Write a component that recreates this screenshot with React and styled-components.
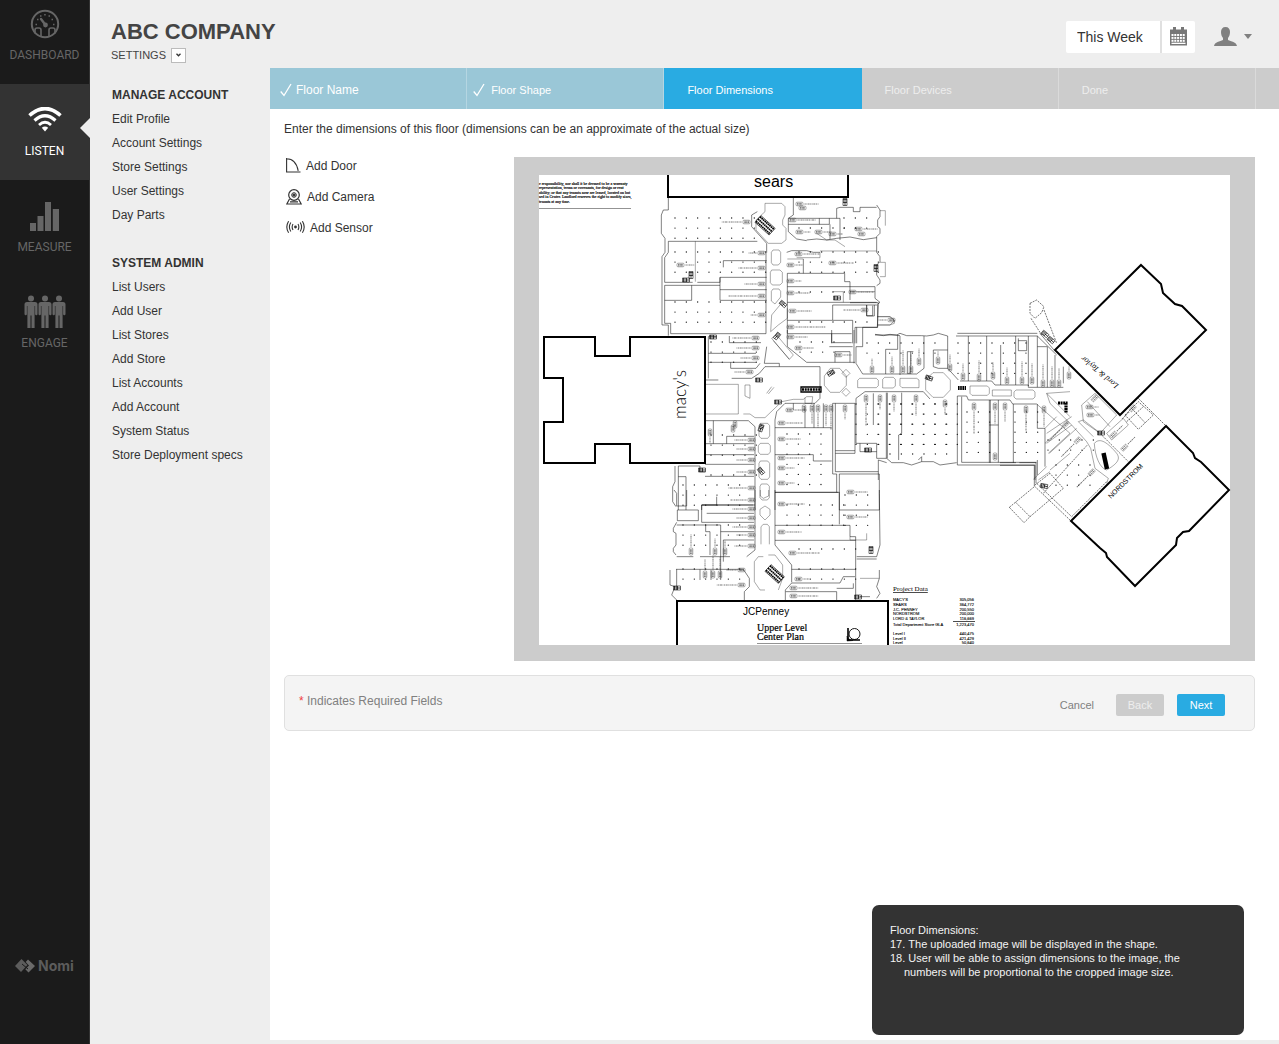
import React from "react";
import styled, { createGlobalStyle } from "styled-components";

const Global = createGlobalStyle`
  *, *::before, *::after { box-sizing: border-box; }
  body {
    margin: 0;
    background: #eee;
    color: #333;
    font: 12px/16px "Liberation Sans", Arial, sans-serif;
  }
  button, input { font: inherit; color: inherit; margin: 0; }
  button { cursor: pointer; border: 0; background: none; padding: 0; }
  a { color: inherit; text-decoration: none; }
  ul { list-style: none; margin: 0; padding: 0; }
`;

const Page = styled.div`
  display: flex;
  min-height: 100vh;
`;

/* ---------- dark navigation rail ---------- */

const Rail = styled.nav`
  flex: 0 0 90px;
  display: flex;
  flex-direction: column;
  justify-content: space-between;
  background: #1b1b1b;
  border-right: 1px solid #333;
`;

const RailLink = styled.a`
  position: relative;
  display: flex;
  flex-direction: column;
  align-items: center;
  justify-content: flex-end;
  height: ${(p) => (p.$first ? 84 : 96)}px;
  padding-bottom: 21px;
  gap: 6px;
  font-family: Roboto, "Liberation Sans", sans-serif;
  font-size: 12px;
  line-height: 16px;
  color: ${(p) => (p.$active ? "#fff" : "#666")};
  background: ${(p) => (p.$active ? "#333" : "transparent")};

  &::after {
    content: ${(p) => (p.$active ? '""' : "none")};
    position: absolute;
    right: -1px;
    top: 34px;
    border: 10px solid transparent;
    border-left-width: 0;
    border-right-color: #eee;
  }
`;

const IconSlot = styled.span`
  display: flex;
  align-items: center;
  justify-content: center;
  height: 34px;
`;

const Brand = styled.a`
  display: flex;
  align-items: center;
  gap: 3px;
  padding: 0 0 70px 15px;
  font: 700 14px/16px Inter, "Liberation Sans", sans-serif;
  color: #5c5c5c;
`;

/* ---------- workspace ---------- */

const Workspace = styled.div`
  flex: 1;
  min-width: 0;
  display: flex;
  flex-direction: column;
`;

const Header = styled.header`
  display: flex;
  justify-content: space-between;
  height: 68px;
  padding: 20px 27px 0 21px;
`;

const Company = styled.h1`
  margin: 0;
  font-size: 22px;
  line-height: 24px;
  color: #444;
`;

const Crumb = styled.div`
  display: flex;
  align-items: center;
  gap: 5px;
  margin-top: 3px;
  font-size: 11px;
  color: #444;
`;

const CrumbButton = styled.button`
  display: grid;
  place-items: center;
  width: 15px;
  height: 15px;
  background: #fff;
  border: 1px solid #bbb;
`;

const HeaderTools = styled.div`
  display: flex;
  align-items: center;
  height: 33px;
`;

const PeriodInput = styled.input`
  width: 94px;
  height: 32px;
  padding: 0 11px;
  border: 0;
  border-radius: 2px 0 0 2px;
  background: #fff;
  font-size: 14px;
`;

const CalendarButton = styled.button`
  display: grid;
  place-items: center;
  width: 35px;
  height: 32px;
  background: #fff;
  border-left: 2px solid #e0e0e0;
  border-radius: 0 2px 2px 0;
`;

const UserButton = styled.button`
  display: flex;
  align-items: center;
  gap: 7px;
  margin-left: 19px;
`;

const Columns = styled.div`
  flex: 1;
  display: flex;
  padding-bottom: 4px;
`;

const SideMenu = styled.nav`
  flex: 0 0 180px;
  padding: 15px 0 0 22px;
`;

const MenuGroup = styled.section`
  margin-bottom: 24px;
`;

const MenuTitle = styled.h2`
  margin: 0;
  font-size: 12px;
  line-height: 24px;
`;

const MenuLink = styled.a`
  display: block;
  line-height: 24px;
  white-space: nowrap;
`;

const Main = styled.main`
  position: relative;
  flex: 1;
  min-width: 0;
  background: #fff;
`;

const Steps = styled.ol`
  display: grid;
  grid-template-columns: repeat(5, 1fr);
  height: 41px;
  margin: 0;
  padding: 0 23px 0 0;
  list-style: none;
  background: #ccc;
`;

const stepColor = { done: "#9ac7d7", current: "#29abe2", todo: "#ccc" };
const stepEdge = { done: "#b5d6e2", current: "#29abe2", todo: "#dadada" };

const Step = styled.li`
  display: flex;
  align-items: center;
  padding: 3px 0 0 ${(p) => (p.$state !== "done" ? 23 : p.$lead ? 10 : 6)}px;
  gap: ${(p) => (p.$lead ? 4 : 6)}px;
  font-size: ${(p) => (p.$lead ? 12 : 11)}px;
  color: ${(p) => (p.$state === "todo" ? "#eee" : "#fff")};
  background: ${(p) => stepColor[p.$state]};
  border-right: 1px solid ${(p) => stepEdge[p.$state]};
`;

const Body = styled.div`
  padding: 12px 24px 0 14px;
`;

const Intro = styled.p`
  margin: 0 0 20px;
`;

const Editor = styled.div`
  display: grid;
  grid-template-columns: 230px 1fr;
`;

const Tools = styled.div`
  display: flex;
  flex-direction: column;
  align-items: flex-start;
  gap: 13px;
`;

const ToolButton = styled.button`
  display: flex;
  align-items: center;
  gap: 5px;
  height: 18px;
  padding-left: 2px;
`;

const PlanFrame = styled.figure`
  margin: 0;
  padding: 18px 25px 16px;
  background: #ccc;
`;

const Plan = styled.svg`
  display: block;
  width: 100%;
  height: auto;
  overflow: visible;
  background: #fff;
`;

const FormBar = styled.footer`
  display: flex;
  align-items: center;
  gap: 13px;
  min-height: 56px;
  margin-top: 14px;
  padding: 4px 29px 0 14px;
  border: 1px solid #e0e0e0;
  border-radius: 5px;
  background: #f4f4f4;
  color: #808080;
`;

const Required = styled.span`
  flex: 1;
  padding-bottom: 8px;
`;

const Star = styled.span`
  color: #f04040;
`;

const FormButton = styled.button`
  min-width: 48px;
  height: 22px;
  padding: 0 9px;
  border-radius: 2px;
  font-size: 11px;
  color: ${(p) => (p.$kind === "plain" ? "#808080" : p.$kind === "muted" ? "#eee" : "#fff")};
  background: ${(p) => (p.$kind === "plain" ? "transparent" : p.$kind === "muted" ? "#ccc" : "#29abe2")};
`;

const Note = styled.aside`
  position: absolute;
  right: 35px;
  bottom: 5px;
  width: 372px;
  min-height: 130px;
  padding: 18px 40px 18px 18px;
  border-radius: 7px;
  background: #333;
  color: #f4f4f4;
  font-size: 11px;
  line-height: 14px;
`;

const NoteTitle = styled.p`
  margin: 0;
`;

const NoteList = styled.ol`
  margin: 0;
  padding: 0;
  list-style-position: inside;
`;

const NoteItem = styled.li`
  padding-left: 14px;
  text-indent: -14px;
`;

/* ---------- icons ---------- */

const GaugeIcon = () => (
  <svg width="30" height="30" viewBox="0 0 30 30" fill="none" stroke="#666" strokeWidth="2">
    <circle cx="15" cy="15" r="13.2" />
    <path d="M5 24.5V21q0-2 2-2h2q2 0 2 2v6M25 24.5V21q0-2-2-2h-2q-2 0-2 2v6" strokeWidth="1.6" />
    <path d="M11 10l4.5 6" strokeWidth="2.4" strokeLinecap="round" />
    <circle cx="15.5" cy="16" r="1.4" fill="#666" />
    <path d="M5.500 15.500h1.500M23 15.500h1.500M7 10.500h1.500M21.500 10.500h1.500M10 7h1.500M14.200 5.700h1.500M18.500 7h1.500" strokeWidth="1.500" />
  </svg>
);

const WifiIcon = () => (
  <svg width="34" height="26" viewBox="0 0 34 26" fill="none" stroke="#fff">
    <path d="M1.500 8.500Q17-5.500 32.500 8.500" strokeWidth="3.600" />
    <path d="M6.500 13.500Q17 4 27.500 13.500" strokeWidth="3.200" />
    <path d="M11 18Q17 12.500 23 18" strokeWidth="2.800" />
    <path d="M13.800 20.800Q17 18.400 20.200 20.800L17 24.500Z" fill="#fff" stroke="none" />
  </svg>
);

const BarsIcon = () => (
  <svg width="29" height="30" viewBox="0 0 29 30" fill="#666">
    <path d="M0 22h6v8H0zM7.500 15h6v15h-6zM15 1h6v29h-6zM22.800 8H29v22h-6.200z" />
  </svg>
);

const PeopleIcon = () => (
  <svg width="42" height="34" viewBox="0 0 42 34" fill="#666">
    {[0, 14, 28].map((x) => (
      <g key={x} transform={`translate(${x} 0)`}>
        <circle cx="7" cy="3.500" r="3" />
        <path d="M3 7h8q2.500 0 2.500 2.500V19q0 1.200-1.200 1.200T11.100 19v-8h-.5v22H7.500V20.500h-1V33H3.400V11h-.5v8q0 1.200-1.200 1.200T.5 19V9.500Q.5 7 3 7Z" />
      </g>
    ))}
  </svg>
);

const NomiMark = () => (
  <svg width="20" height="14" viewBox="0 0 20 14" fill="#5c5c5c">
    <path d="M6.500 0l6 6-6.500 7L0 7Z" />
    <path d="M13 0.500l7 6.500-6.500 6.500-3.200-3.200L14 6.500l-3.300-3.600Z" fill="#6a6a6a" />
    <path d="M7 5l6 5" stroke="#1b1b1b" strokeWidth="1" />
  </svg>
);

const CalendarIcon = () => (
  <svg width="17" height="19" viewBox="0 0 17 19">
    <path d="M0 2.500h17v16H0z" fill="#777" />
    <path d="M3 0h3v4H3zM11 0h3v4h-3z" fill="#777" />
    <g fill="#fff">
      {[7, 9.900, 12.800].map((y) =>
        [1.500, 4.300, 7.100, 9.900, 12.700].map((x) => <path key={`${x}-${y}`} d={`M${x} ${y}h2v2h-2z`} />)
      )}
      <path d="M1.500 15.700h14v1.300h-14z" />
    </g>
  </svg>
);

const UserIcon = () => (
  <svg width="23" height="20" viewBox="0 0 23 20" fill="#808080">
    <path d="M11.500 0c3 0 4.600 2 4.500 5 0 2.500-.8 4.500-2 6v2c3 1.300 8.500 2 9 6H0C.5 15 6 14.300 9 13v-2C7.800 9.500 7 7.500 7 5c0-3 1.500-5 4.500-5Z" />
  </svg>
);

const CheckIcon = () => (
  <svg width="12" height="14" viewBox="0 0 12 14" fill="none" stroke="#fff" strokeWidth="1.300">
    <path d="M.7 8.500L4 12.500 11 1" />
  </svg>
);

const DoorIcon = () => (
  <svg width="15" height="16" viewBox="0 0 15 16" fill="none" stroke="#333" strokeWidth="1.100">
    <path d="M.6 0V14H14.500M.6 .8Q10 1 12.200 12.800" />
  </svg>
);

const CameraIcon = () => (
  <svg width="16" height="17" viewBox="0 0 16 17" fill="none" stroke="#333" strokeWidth="1.200">
    <circle cx="8" cy="6" r="5.300" />
    <circle cx="8" cy="6" r="2.300" strokeWidth="1" />
    <circle cx="8" cy="6" r="1" fill="#333" />
    <path d="M3.500 10L.8 15H15.200L12.500 10M4 12.800H12" />
  </svg>
);

const SensorIcon = () => (
  <svg width="19" height="14" viewBox="0 0 19 14" fill="none" stroke="#333" strokeWidth="1.100">
    <circle cx="9.500" cy="6" r="1.400" fill="#333" stroke="none" />
    <path d="M7 3Q5.300 6 7 9M12 3Q13.700 6 12 9M4.800 1.500Q2 6 4.800 10.500M14.200 1.500Q17 6 14.200 10.500M2.600 .2Q-1 6 2.600 11.800M16.400 .2Q20 6 16.400 11.800" />
  </svg>
);

/* ---------- floor plan drawing ---------- */

const anchors = [
  "M668 175V197H848V175",
  "M544 337H595V356H630V337H705V463H630V444H595V463H544V422H563V378H544Z",
  "M677 645V601H888V645",
  "M1141 265L1161 284L1163 293L1175 304L1182 306L1206 330L1120 415L1055 350Z",
  "M1166 426L1193 453L1195 458L1201 462L1229 490L1189 531L1183 532L1177 538L1176 545L1135 586L1107 557L1106 553L1100 548L1071 521Z",
];

const regions = [
  {
    x: 650, y: 165,
    walls:
      "M55 97V135H40L34 150V205L45 220V262L36 275V480H55V512M55 229H322M55 229V262L44 278V352H128M44 361H210M142 352H210V337M44 361V475H62V506H348V263M44 406H125V361M210 337V406H350M210 374H350M210 337H350M220 307V287H350M305 150V185L350 235V263M305 150L322 140M430 97V150L415 160V200L440 222L470 227M415 160H570V225M415 178H538V160M508 160V178M540 178V222M560 160V130L570 127H610V140H630V127H680M680 120L690 135V155L683 165V185L690 190V205L680 215V262L690 275V290L680 300V330L690 345V355L680 362M470 225L500 222L530 225L560 220L600 216L640 224L680 218M410 262L425 257H470L490 262H510M412 290M412 325H584V350H600V365M412 325V505M412 365H675V400L690 412L680 420H548V465M412 412H680M600 365V405M683 420V487H615V535M412 466H608V535M412 506H605M545 506V535M650 420V452H668V422M620 487V535M460 282V325M675 508L700 512L720 508L750 512",
    fine:
      "M136 229V350M345 115H395L405 125V150L398 165V180L408 190V225L395 235H355L318 195V165L345 140ZM369 255H387L392 262V292L385 300H369L364 293V262ZM365 315H390L397 322V353L390 360H367L361 353V322ZM369 372H387L392 379V396L375 417L364 408V379ZM412 430V460L385 480L362 500L365 450L390 420M690 137H706V182M690 292H706V335H690M683 455H720L733 465V475L720 480H683M510 258H680M440 278H510V262M412 282H460M548 380H580V412M555 225L585 245M500 205L530 225H555M600 380H675",
  },
  {
    x: 650, y: 330,
    walls:
      "M175 20V145M175 20H200M238 18V38H333M175 70H318M175 97H318M242 97V115H318M165 150H205M412 0V50L470 97H615M350 50L343 100H388V110H345L328 130L305 145H245M388 110H510V205L495 220H405L380 245L375 270V540M318 115L330 100M315 290V540M315 290L295 272H165M165 341H312M190 272V341M230 341V319H312M165 374H312M165 403H312M165 439H312M375 293H545M375 374H490V393H545M375 487H565M548 220V432H560V487M548 220H615V370H556M556 362H615M556 220V425H685M568 540V432H688V540M492 220V293M465 230V293M430 220V240M545 0V38H605M538 50H608M555 97V65H600V97M612 0V100M85 540V408H150V425H165M75 408V455L68 470V515L78 530M85 440H108V540M155 540V525H315M155 525H200V500M520 220V293",
    fine:
      "M165 163H265V252H165M300 165V205L285 198V165ZM280 252H300L315 263H345L395 215M331 280H353L359 287V318L353 325H333L327 318V287ZM331 340H355L361 347V366L355 373H331L325 366V347ZM331 393H353L359 400V441L353 448H333L327 441V400ZM334 462H352L358 469V503L352 510H336L330 503V469ZM541 115H569L589 138V166L569 187H541L523 166V138ZM588 118L600 130L588 142L576 130ZM588 175L600 187L588 199L576 187ZM365 25L380 15L430 75L418 88ZM370 32L418 88M350 190L365 170M355 192L372 172M395 215L430 208H460L470 200H488L486 220H465V203",
  },
  {
    x: 650, y: 490,
    walls:
      "M72 0L80 10V48H110V0M82 60H145V92H82ZM155 45H310M155 45V97H312M170 70H312M80 97L70 115V125L78 130V165L70 175V185L78 195M80 105H212V240M167 105V125H180V195M80 200H130M150 200H240M212 125H312M220 150H312M220 150V215M315 0V180L290 200M375 0V165L425 225V277M375 7H568V103M568 60H688M375 106H600V140H617V240M375 151H617M688 0V10L690 165L680 200H620M620 207H680M425 238H617M425 279H570L580 260H615M407 305H560V330M560 295H610V280M406 330V300L425 279M617 240V330M630 320H660M688 240V265L680 290L690 310L680 325M78 238H150V270M60 240V285L75 290L65 315L80 330M150 238H280L298 265V290L283 305V330M183 240V270M212 240V270M80 238V300",
    fine:
      "M325 200H340M355 195H375L398 225V265L385 300M325 200L313 215V275L330 300H345M331 0V18L340 25L356 18V0M345 48L360 58V75L345 90L330 75V58ZM333 163V110L340 103H352L358 110V163M600 140V150H650V130M688 265H630",
  },
  {
    x: 850, y: 300,
    walls:
      "M75 105H140L150 100L170 107H215L230 108L250 105L265 100L293 108V205M322 100H562M318 108H562V262H640M355 108V243M410 108V243M452 135V255M497 108V255M535 108V258M330 243H425L435 255H535V262H562M38 105V140H18V190L38 222H200L222 205V108M107 222V148H143V105M150 108V225M182 155V220H172V155H190M250 150H293M250 150V200L265 205H293L325 240M0 8H85L82 82H38V105M50 15V48H73V15M18 295L45 275H220L240 297M18 295V430H80V475H110L125 488H160L185 495L215 485V470L205 480M112 278V475M109 278V475M155 278V400L146 405V480M70 280V375M215 485L250 485L270 495L320 488M322 288V495H555V540M335 290V487H560M322 288H350L355 300H480L488 312H560M418 300V488M421 300V488M445 300V487M418 375H445M490 312V488M562 312V385H585V500M562 480V525M85 540V480L110 488M562 108L620 165M570 100L612 150M592 140V262M615 165V262M562 140H592M505 115V152H530V122H505M30 430V455H80M640 200V250",
    fine:
      "M29 235H79L85 241V257L79 263H23V241ZM104 232H130L136 238V258L130 264H98V238ZM150 235H200L207 240V263H156L150 257ZM249 218H280L301 240V270L280 292H249L227 270V240ZM360 258H412L418 264V280L412 286H366L360 280ZM427 270H484V288H427ZM498 270H549L555 276V291L549 297H498L492 291V276ZM82 50H120L133 62L120 75H82M590 280L660 350M590 280L660 275M560 312L660 400M585 385L620 350M585 430L655 365M595 460L660 400M600 510L660 460M550 538L590 500M565 540L600 515",
    dashed: "M540 10L560 0L582 20L575 38L555 55L540 40ZM543 55L575 105M582 30L620 130",
  },
  {
    x: 1000, y: 390,
    walls: "M0 218H48M58 218H108V280M0 226H103V288",
    fine:
      "M140 10L150 40L215 105L260 155L272 175L285 235L325 265L320 280M235 95L250 90L295 125M235 95L280 140M140 130L215 80M140 160L215 105M148 190L230 115M283 160C300 140 325 160 350 190C365 210 345 225 320 240C300 235 285 200 283 160ZM245 45L285 10L350 75L300 130L250 95ZM262 35L330 110M320 130L370 85L385 105L335 150Z",
    dashed:
      "M103 288L213 393M110 280L215 380L320 275M28 352L103 290M28 352L72 398L90 380L45 335M90 380L190 295L150 250L105 285M130 310L262 165M375 75L415 35L460 75L415 118ZM395 55L435 98M380 95L430 50M415 25L495 105M300 130L385 215",
  },
];

// Structural columns: [left, top, columns, rows]
const columnGrids = [
  [675, 218, 8, 3], [675, 252, 9, 3], [675, 302, 9, 3], [799, 228, 6, 1], [844, 218, 3, 2],
  [799, 252, 8, 3], [799, 292, 5, 1], [799, 322, 7, 1], [787, 434, 4, 6], [800, 342, 4, 2],
  [787, 505, 6, 3], [845, 495, 3, 4], [683, 485, 6, 3], [683, 525, 6, 3], [683, 569, 6, 2],
  [799, 549, 6, 1], [799, 569, 6, 2], [867, 343, 7, 2], [856, 404, 9, 5], [878, 404, 8, 5],
  [890, 454, 6, 1], [967, 412, 3, 5], [1015, 412, 3, 5], [958, 343, 7, 4], [711, 342, 5, 3], [711, 435, 5, 3],
  [1048, 440, 5, 2], [1056, 465, 4, 3], [711, 475, 5, 1],
];

// Store labels: [x, y, rotation, length of the name line]
const labels = [
  [747, 222, 180, 20], [762, 253, 180, 8], [762, 268, 180, 18], [762, 284, 180, 12], [762, 296, 180, 28],
  [762, 315, 180, 6], [799, 204, 0, 14], [802, 208, 0, 0], [792, 220, 0, 18], [799, 232, 0, 6], [818, 232, 0, 8], [832, 234, 0, 5],
  [858, 229, 0, 14], [861, 234, 0, 0], [798, 254, 0, 16], [790, 265, 0, 7], [832, 263, 0, 16], [790, 281, 0, 6], [790, 293, 0, 14],
  [792, 311, 0, 14], [790, 327, 0, 30], [790, 337, 0, 12], [756, 338, 180, 18], [756, 348, 180, 14],
  [756, 358, 180, 10], [750, 372, 180, 10], [798, 348, 0, 10], [838, 355, 0, 8], [789, 410, 0, 12],
  [781, 423, 0, 16], [781, 439, 0, 14], [781, 458, 0, 18], [781, 468, 0, 8], [781, 483, 0, 8], [781, 504, 0, 18],
  [781, 532, 0, 15], [792, 553, 0, 22], [798, 579, 0, 6], [793, 588, 0, 20], [793, 596, 0, 20],
  [752, 440, 180, 12], [752, 449, 180, 10], [752, 460, 180, 10], [752, 472, 180, 10], [752, 488, 180, 18],
  [752, 500, 180, 16], [752, 509, 180, 14], [752, 518, 180, 10], [752, 527, 180, 14], [752, 535, 180, 10],
  [752, 546, 180, 12], [742, 570, 180, 10], [742, 585, 180, 20], [733, 428, 90, 0], [735, 424, 90, 0],
  [710, 432, 90, 5], [691, 552, -90, 12], [715, 552, -90, 8], [725, 552, -90, 6], [705, 575, -90, 10],
  [713, 575, -90, 14], [720, 575, -90, 12], [872, 370, -90, 6], [892, 370, -90, 8], [903, 370, -90, 14],
  [911, 370, -90, 10], [919, 362, -90, 8], [938, 361, -90, 4], [950, 368, -90, 8], [963, 377, -90, 8],
  [979, 378, -90, 12], [993, 376, -90, 8], [1007, 381, -90, 8], [1022, 381, -90, 14], [1032, 381, -90, 12],
  [1043, 384, -90, 14], [1052, 384, -90, 12], [1059, 384, -90, 10], [1069, 376, -90, 4], [866, 398, 90, 22],
  [880, 398, 90, 6], [894, 398, 90, 8], [916, 398, 90, 12], [945, 403, 90, 6], [974, 406, 90, 22],
  [995, 406, 90, 12], [1005, 406, 90, 10], [1026, 409, 90, 16], [1044, 409, 90, 12], [845, 408, 90, 6],
  [804, 408, 90, 0], [812, 408, 90, 10], [818, 408, 90, 14], [826, 408, 90, 12], [831, 408, 90, 16],
  [995, 457, -90, 0], [1095, 398, 135, 0], [1089, 407, 0, 4], [1090, 415, 0, 4], [1078, 440, 135, 18],
  [1066, 424, 135, 18], [1092, 472, 135, 16], [1124, 448, -45, 10], [1113, 435, -45, 8], [1133, 408, 135, 10],
  [865, 310, 180, 16], [892, 320, 180, 8], [852, 292, 0, 16], [850, 517, 0, 12], [850, 492, 0, 12], [680, 265, 0, 9],
];

const Label = ({ at: [x, y, turn, length] }) => (
  <g transform={`translate(${x} ${y}) rotate(${turn})`} stroke="#333" fill="none">
    <rect x="-3" y="-1.800" width="7" height="3.600" rx="1" strokeWidth=".4" />
    <path d="M-2 -.6H3M-2 .8H3" strokeWidth=".7" strokeDasharray="1.600 .4 .8 .3" />
    {length > 0 && <path d={`M5.500 0H${5.5 + length}`} strokeWidth="1" strokeDasharray="1.300 .6 .7 .5 2 .6" opacity=".65" />}
  </g>
);

const Escalator = ({ x, y, width, turn }) => (
  <g transform={`translate(${x} ${y}) rotate(${turn})`} fill="none" stroke="#000">
    <path d={`M0 -3H${width}M0 0H${width}M0 3H${width}`} strokeWidth="1.800" strokeDasharray="1.600 .5" />
    <path d={`M0 -4.500H${width}V4.500H0Z`} strokeWidth=".6" />
  </g>
);

// Stairs and service cores: [x, y, rotation]
const stairs = [
  [783, 304, 40], [777, 336, 130], [761, 428, 110], [761, 471, 50], [831, 373, 150], [929, 378, 20],
  [1051, 340, 40], [1045, 334, 40], [1044, 486, 10], [868, 450, 0], [871, 550, 90], [837, 298, 0],
  [702, 470, 0], [677, 588, 0], [691, 275, 90], [713, 337, 0], [845, 202, 90], [876, 268, 90],
  [759, 380, 0], [778, 402, 0], [1101, 433, 0], [686, 280, 0], [858, 597, 0],
];

const disclaimer = [
  "e responsibility, nor shall it be deemed to be a warranty",
  "representation, terms or covenants, for design or rent",
  "ability; or that any tenants now are leased, located on but",
  "sed in Center. Landlord reserves the right to modify sizes,",
  "tenants at any time.",
];

const areas = [
  [601, "MACY'S", "305,056"], [606, "SEARS", "364,772"], [611, "J.C. PENNEY", "200,550"],
  [615, "NORDSTROM", "200,000"], [620, "LORD & TAYLOR", "116,669"], [626, "Total Department Store GLA", "1,223,470"],
  [635, "Level I", "440,475"], [640, "Level II", "421,429"], [644, "Level", "50,640"],
];

const sans = '"Liberation Sans", Arial, sans-serif';
const serif = '"Liberation Serif", "Times New Roman", serif';

const FloorPlan = () => (
  <Plan viewBox="539 175 691 470" role="img" aria-label="Mall floor plan, upper level">
    {regions.map((r) => (
      <g key={`${r.x}-${r.y}`} transform={`translate(${r.x} ${r.y}) scale(.33333)`} fill="none" stroke="#000">
        <path d={r.walls} strokeWidth="2" opacity=".75" />
        <path d={r.fine} strokeWidth="1.700" opacity=".6" />
        {r.dashed && <path d={r.dashed} strokeWidth="2.200" strokeDasharray="6 3" opacity=".75" />}
      </g>
    ))}
    <g fill="#111">
      {columnGrids.map(([x, y, cols, rows]) =>
        Array.from({ length: cols * rows }, (_, i) => (
          <circle key={`${x}-${y}-${i}`} cx={x + (i % cols) * 11.33} cy={y + Math.floor(i / cols) * 10.1} r=".65" />
        ))
      )}
    </g>
    {labels.map((l) => <Label key={l.join()} at={l} />)}

    <Escalator x={758} y={219} width={19} turn={42} />
    <Escalator x={768} y={568} width={18} turn={42} />
    <g fill="none" stroke="#000">
      <path d="M801 387H821V392H801Z" strokeWidth="1.300" />
      <path d="M802 389.500H820" strokeWidth="2.400" strokeDasharray="2 .7" />
      <path d="M1058 403H1066V413" strokeWidth="3.200" strokeDasharray="2 .6" />
      <path d="M1103.500 453L1107 469" strokeWidth="4.500" />
      <path d="M958 388H966" strokeWidth="4" strokeDasharray="1.600 .6" />
    </g>
    {stairs.map(([x, y, turn]) => (
      <g key={`${x}-${y}`} transform={`translate(${x} ${y}) rotate(${turn})`} fill="none" stroke="#111">
        <path d="M-3.500 -2H3.500V2H-3.500Z" strokeWidth=".6" />
        <path d="M-2.500 -2V2M-1 -2V2M.5 -2V2M0 0H3.500" strokeWidth=".8" />
      </g>
    ))}

    <path d="M668 175H848V197H668ZM705 337V463H566V340H704M677 602H888V645H677Z" fill="#fff" />
    <g fill="none" stroke="#000" strokeWidth="2">
      {anchors.map((d) => <path key={d} d={d} />)}
    </g>

    <g fontFamily={sans} fill="#000">
      <text x="754" y="187" fontSize="16">sears</text>
      <text transform="translate(686 419) rotate(-90)" fontFamily="Lato, sans-serif" fontWeight="300" fontSize="17">macy's</text>
      <text x="743" y="615" fontSize="10">JCPenney</text>
      <text transform="translate(1111 499) rotate(-45)" fontSize="7">NORDSTROM</text>
      <text transform="translate(1119 385) rotate(220)" fontFamily={serif} fontStyle="italic" fontSize="8">Lord &amp; Taylor</text>
    </g>
    <g fontFamily={serif} fill="#000">
      <text x="757" y="631" fontSize="10" stroke="#000" strokeWidth=".2">Upper Level</text>
      <text x="757" y="640" fontSize="10" stroke="#000" strokeWidth=".2">Center Plan</text>
      <text x="893" y="591" fontSize="7" textDecoration="underline">Project Data</text>
      {disclaimer.map((line, i) => (
        <text key={line} x="539" y={185 + i * 4.4} fontSize="4" stroke="#000" strokeWidth=".15">{line}</text>
      ))}
    </g>
    <path d="M539 208.500H631M757 643.500H862" stroke="#777" strokeWidth=".8" />
    <g fill="none" stroke="#000">
      <path d="M848 628V640H860" strokeWidth="1.600" />
      <circle cx="854.500" cy="634" r="5.500" strokeWidth=".9" />
      <path d="M847 636Q848 640 853 640.500L847 641Z" fill="#000" strokeWidth=".5" />
    </g>
    <g fontFamily={sans} fontSize="4" fill="#000" stroke="#000" strokeWidth=".1">
      {areas.map(([y, name, size]) => (
        <React.Fragment key={name}>
          <text x="893" y={y}>{name}</text>
          <text x="974" y={y} textAnchor="end">{size}</text>
        </React.Fragment>
      ))}
      <path d="M953 621.500H975" strokeWidth=".7" />
    </g>
  </Plan>
);

/* ---------- page ---------- */

const rail = [
  { label: "DASHBOARD", Icon: GaugeIcon },
  { label: "LISTEN", Icon: WifiIcon, active: true },
  { label: "MEASURE", Icon: BarsIcon },
  { label: "ENGAGE", Icon: PeopleIcon },
];

const menu = [
  { title: "MANAGE ACCOUNT", items: ["Edit Profile", "Account Settings", "Store Settings", "User Settings", "Day Parts"] },
  {
    title: "SYSTEM ADMIN",
    items: ["List Users", "Add User", "List Stores", "Add Store", "List Accounts", "Add Account", "System Status", "Store Deployment specs"],
  },
];

const steps = [
  ["Floor Name", "done"],
  ["Floor Shape", "done"],
  ["Floor Dimensions", "current"],
  ["Floor Devices", "todo"],
  ["Done", "todo"],
];

const tools = [
  ["Add Door", DoorIcon],
  ["Add Camera", CameraIcon],
  ["Add Sensor", SensorIcon],
];

export default function App() {
  return (
    <>
      <Global />
      <Page>
        <Rail aria-label="Main">
          <div>
            {rail.map(({ label, Icon, active }, i) => (
              <RailLink key={label} href="#" $active={active} $first={i === 0} aria-current={active ? "page" : undefined}>
                <IconSlot><Icon /></IconSlot>
                {label}
              </RailLink>
            ))}
          </div>
          <Brand href="#"><NomiMark />Nomi</Brand>
        </Rail>

        <Workspace>
          <Header>
            <div>
              <Company>ABC COMPANY</Company>
              <Crumb>
                SETTINGS
                <CrumbButton aria-label="Open settings menu">
                  <svg width="5" height="4" viewBox="0 0 5 4" fill="none" stroke="#333" strokeWidth="1.300"><path d="M.5 .8L2.500 2.800L4.500 .8" /></svg>
                </CrumbButton>
              </Crumb>
            </div>
            <HeaderTools>
              <PeriodInput type="text" aria-label="Period" defaultValue="This Week" />
              <CalendarButton aria-label="Choose dates"><CalendarIcon /></CalendarButton>
              <UserButton aria-label="User menu">
                <UserIcon />
                <svg width="8" height="6" viewBox="0 0 8 6" fill="#808080"><path d="M0 0H8L4 5Z" /></svg>
              </UserButton>
            </HeaderTools>
          </Header>

          <Columns>
            <SideMenu aria-label="Settings">
              {menu.map((group) => (
                <MenuGroup key={group.title}>
                  <MenuTitle>{group.title}</MenuTitle>
                  <ul>
                    {group.items.map((item) => <li key={item}><MenuLink href="#">{item}</MenuLink></li>)}
                  </ul>
                </MenuGroup>
              ))}
            </SideMenu>

            <Main>
              <Steps>
                {steps.map(([name, state], i) => (
                  <Step key={name} $state={state} $lead={i === 0} aria-current={state === "current" ? "step" : undefined}>
                    {state === "done" && <CheckIcon />}
                    {name}
                  </Step>
                ))}
              </Steps>
              <Body>
                <Intro>Enter the dimensions of this floor (dimensions can be an approximate of the actual size)</Intro>
                <Editor>
                  <Tools>
                    {tools.map(([name, Icon]) => <ToolButton key={name}><Icon />{name}</ToolButton>)}
                  </Tools>
                  <PlanFrame><FloorPlan /></PlanFrame>
                </Editor>
                <FormBar>
                  <Required><Star>*</Star> Indicates Required Fields</Required>
                  <FormButton $kind="plain">Cancel</FormButton>
                  <FormButton $kind="muted">Back</FormButton>
                  <FormButton $kind="primary">Next</FormButton>
                </FormBar>
              </Body>
              <Note>
                <NoteTitle>Floor Dimensions:</NoteTitle>
                <NoteList start={17}>
                  <NoteItem>The uploaded image will be displayed in the shape.</NoteItem>
                  <NoteItem>User will be able to assign dimensions to the image, the numbers will be proportional to the cropped image size.</NoteItem>
                </NoteList>
              </Note>
            </Main>
          </Columns>
        </Workspace>
      </Page>
    </>
  );
}
